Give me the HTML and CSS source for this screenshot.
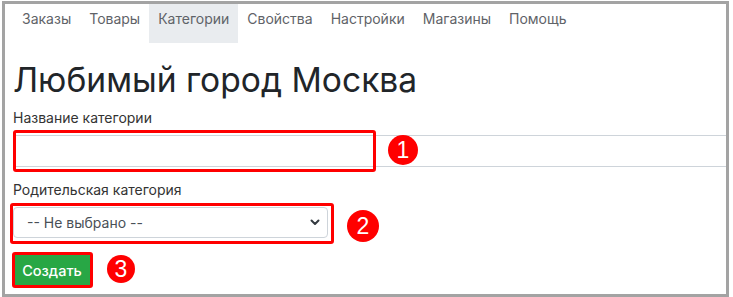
FILE: index.html
```html
<!DOCTYPE html>
<html lang="ru">
<head>
    <meta charset="UTF-8">
    <meta name="viewport" content="width=device-width, initial-scale=1.0">
    <title>Категории</title>
    <link rel="stylesheet" href="styles.css">
</head>
<body>
    <div class="frame">
        <nav class="tabs">
            <a href="#">Заказы</a>
            <a href="#">Товары</a>
            <a href="#" class="active">Категории</a>
            <a href="#">Свойства</a>
            <a href="#">Настройки</a>
            <a href="#">Магазины</a>
            <a href="#">Помощь</a>
        </nav>

        <main class="content">
            <h1>Любимый город Москва</h1>

            <form class="category-form">
                <label class="label" for="name">Название категории</label>
                <div class="field field-name">
                    <input id="name" class="input" type="text">
                    <span class="mark mark-name"></span>
                    <span class="badge badge-1">1</span>
                </div>

                <label class="label label-parent" for="parent">Родительская категория</label>
                <div class="field field-parent">
                    <select id="parent" class="select">
                        <option>-- Не выбрано --</option>
                    </select>
                    <svg class="chevron" width="10" height="7" viewBox="0 0 10 7">
                        <path d="M1.5 1.5 L5 5 L8.5 1.5" fill="none" stroke="#343a40" stroke-width="2" stroke-linecap="round" stroke-linejoin="round"/>
                    </svg>
                    <span class="mark mark-parent"></span>
                    <span class="badge badge-2">2</span>
                </div>

                <div class="field field-submit">
                    <button type="button" class="btn">Создать</button>
                    <span class="mark mark-submit"></span>
                    <span class="badge badge-3">3</span>
                </div>
            </form>
        </main>
    </div>
</body>
</html>
```

FILE: styles.css
```css
body {
    margin: 0;
    padding: 0;
    background-color: #fff;
    font-family: Inter, "Noto Sans", sans-serif;
    color: #212529;
}

.frame {
    margin: 1px 4px 0 2px;
    height: 296px;
    box-sizing: border-box;
    border: 3px solid #a3a3a3;
    overflow: hidden;
}

/* tabs */
.tabs {
    display: flex;
    padding: 0 0 0 8px;
}

.tabs a {
    display: block;
    padding: 5px 9px 14px;
    font-size: 14px;
    line-height: 20px;
    color: #5f6368;
    text-decoration: none;
}

.tabs a.active {
    background-color: #e9ecef;
}

/* content */
.content {
    padding: 0 0 0 8px;
}

h1 {
    margin: 17px 0 0;
    font-size: 33.6px;
    line-height: 40px;
    font-weight: 400;
    color: #212529;
}

.category-form {
    display: flex;
    flex-direction: column;
    align-items: flex-start;
}

.label {
    display: block;
    margin-top: 8px;
    font-size: 14px;
    line-height: 20px;
    color: #333;
}

.label-parent {
    margin-top: 13px;
}

.field {
    position: relative;
}

.field-name {
    margin-top: 7px;
    width: calc(100% + 20px);
}

.input {
    display: block;
    width: 100%;
    height: 32px;
    box-sizing: border-box;
    margin: 0;
    border: 1px solid #ced4da;
    background: #fff;
    font-family: inherit;
    font-size: 14px;
}

.field-parent {
    margin-top: 7px;
}

.select {
    display: block;
    width: 315px;
    height: 31px;
    margin: 0;
    padding: 0 30px 0 13px;
    -webkit-appearance: none;
    appearance: none;
    border: 1px solid #ced4da;
    border-radius: 4px;
    background: #fff;
    font-family: inherit;
    font-size: 14px;
    color: #495057;
}

.chevron {
    position: absolute;
    right: 8px;
    top: 12px;
}

.field-submit {
    margin-top: 15px;
}

.btn {
    display: block;
    width: 78px;
    height: 34px;
    padding: 0;
    border: none;
    border-radius: 3px;
    background-color: #28a745;
    color: #fff;
    font-family: inherit;
    font-size: 14.5px;
    font-weight: 500;
    cursor: pointer;
}

/* annotations */
.mark {
    position: absolute;
    border: 3px solid #ff0000;
    border-radius: 3px;
    box-sizing: border-box;
}

.mark-name {
    left: 0;
    top: -5px;
    width: 363px;
    height: 42px;
}

.mark-parent {
    left: -3px;
    top: -4px;
    width: 324px;
    height: 41px;
}

.mark-submit {
    left: -1px;
    top: -1px;
    width: 81px;
    height: 36px;
}

.badge {
    position: absolute;
    width: 30px;
    height: 30px;
    border-radius: 50%;
    background-color: #ff0000;
    color: #fff;
    font-family: "Liberation Sans", Arial, sans-serif;
    font-size: 23px;
    line-height: 30px;
    text-align: center;
}

.badge-1 {
    left: 375px;
    top: 0;
}

.badge-2 {
    left: 334px;
    top: 3px;
    width: 32px;
    height: 32px;
    line-height: 32px;
}

.badge-3 {
    left: 94px;
    top: 2px;
    width: 28px;
    height: 28px;
    line-height: 28px;
}
```
